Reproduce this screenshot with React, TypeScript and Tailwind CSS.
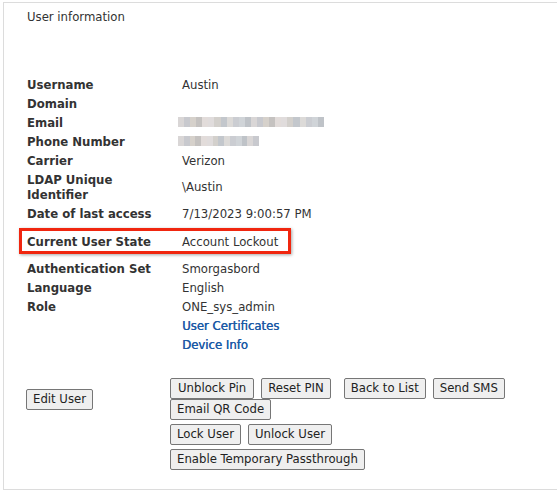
import React from "react";

const font = { fontFamily: '"DejaVu Sans Condensed", "DejaVu Sans", sans-serif' };

function Row({ label, value }: { label: React.ReactNode; value?: React.ReactNode }) {
  return (
    <div className="flex items-center py-[2px] leading-[15px]">
      <div className="w-[155px] font-bold text-[#333]">{label}</div>
      <div className="text-[#333]">{value}</div>
    </div>
  );
}

const blurColors = ["#d9d6d6", "#c3c7cc", "#d6d1cb", "#cbcdd2", "#e2dcda", "#bfc3c8", "#d3d0cc", "#c8c9ce", "#dcdad8", "#c5c2c0", "#d0d4d8", "#e0dcdc"];

function Blur({ w }: { w: number }) {
  const n = Math.round(w / 6);
  return (
    <div className="flex -ml-[4px] h-[10px]" style={{ width: w }}>
      {Array.from({ length: n }).map((_, i) => (
        <div key={i} className="flex-1 h-full" style={{ background: blurColors[(i * 7) % blurColors.length] }} />
      ))}
    </div>
  );
}

function Btn({ children, className = "" }: { children: React.ReactNode; className?: string }) {
  return (
    <button
      className={
        "h-[21px] px-[6px] bg-[#efefef] border border-[#767676] rounded-[2px] text-[13px] leading-[16px] text-[#222] " +
        className
      }
    >
      {children}
    </button>
  );
}

export default function App() {
  return (
    <div className="w-[557px] h-[492px] bg-white overflow-hidden text-[13px]" style={font}>
      <div className="ml-[3px] mt-[2px] w-[560px] h-[488px] border border-[#dcdcdc] border-r-0">
        <div className="pl-[23px] pt-[4px] text-[#333]">User information</div>
        <div className="pl-[23px] pt-[48px]">
          <Row label="Username" value="Austin" />
          <Row label="Domain" value="" />
          <Row label="Email" value={<Blur w={146} />} />
          <Row label="Phone Number" value={<Blur w={81} />} />
          <Row label="Carrier" value="Verizon" />
          <Row label={<>LDAP Unique<br />Identifier</>} value="\Austin" />
          <Row label="Date of last access" value="7/13/2023 9:00:57 PM" />
          <div className="-ml-[8px] mt-[5px] mb-[5px] w-[272px] border-[3px] border-[#f0260f] shadow-[1px_1px_3px_rgba(0,0,0,0.35)] pl-[5px] pt-[3px] pb-[1px]">
            <div className="flex items-center leading-[16px]">
              <div className="w-[155px] font-bold text-[#333]">Current User State</div>
              <div className="text-[#333]">Account Lockout</div>
            </div>
          </div>
          <Row label="Authentication Set" value="Smorgasbord" />
          <Row label="Language" value="English" />
          <Row label="Role" value="ONE_sys_admin" />
          <Row
            label=""
            value={<span className="text-[#1b5aa6] [text-shadow:0.4px_0_0_#1b5aa6]">User Certificates</span>}
          />
          <Row
            label=""
            value={<span className="text-[#1b5aa6] [text-shadow:0.4px_0_0_#1b5aa6]">Device Info</span>}
          />
        </div>
        <div className="flex pl-[22px] pt-[24px]">
          <div className="w-[144px] pt-[11px]">
            <Btn>Edit User</Btn>
          </div>
          <div className="flex flex-col">
            <div className="flex gap-[7px]">
              <Btn className="px-[7px]">Unblock Pin</Btn>
              <Btn className="px-[5px]">Reset PIN</Btn>
              <Btn className="ml-[6px]">Back to List</Btn>
              <Btn className="px-[5px]">Send SMS</Btn>
            </div>
            <div className="flex">
              <Btn>Email QR Code</Btn>
            </div>
            <div className="flex gap-[7px] mt-[4px]">
              <Btn>Lock User</Btn>
              <Btn>Unlock User</Btn>
            </div>
            <div className="flex mt-[4px]">
              <Btn>Enable Temporary Passthrough</Btn>
            </div>
          </div>
        </div>
      </div>
    </div>
  );
}
